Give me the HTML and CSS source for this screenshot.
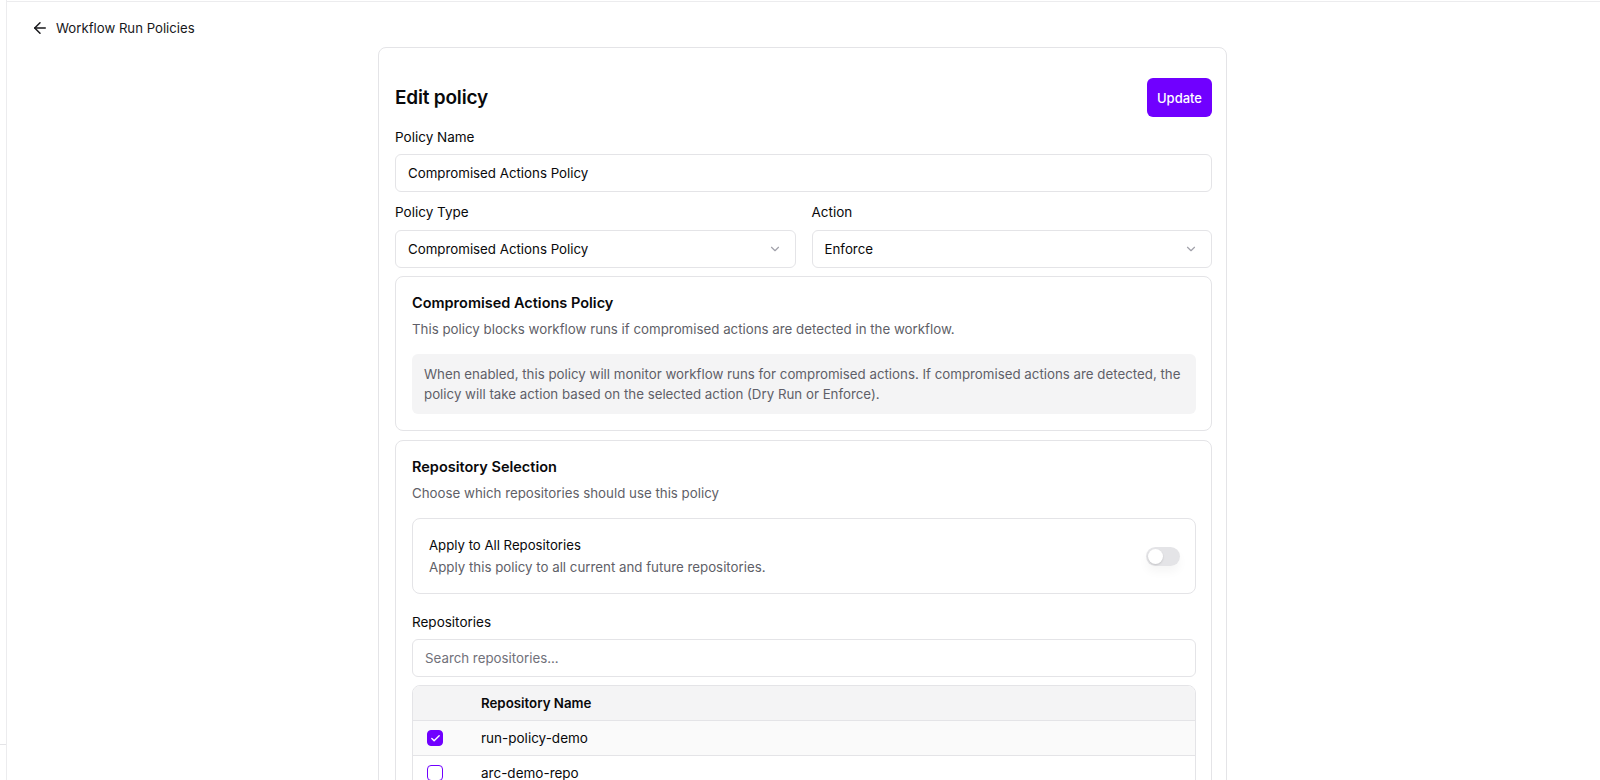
FILE: index.html
```html
<!DOCTYPE html>
<html lang="en">
<head>
  <meta charset="UTF-8">
  <meta name="viewport" content="width=device-width, initial-scale=1.0">
  <title>Edit policy</title>
  <link rel="stylesheet" href="styles.css">
</head>
<body>
  <div class="layout">
    <aside class="sidebar">
      <div class="sidebar-rule"></div>
    </aside>

    <main class="main">
      <a class="back-link" href="#">
        <svg class="back-icon" viewBox="0 0 24 24" fill="none" stroke="currentColor" stroke-width="2" stroke-linecap="round" stroke-linejoin="round">
          <path d="m12 19-7-7 7-7"/>
          <path d="M19 12H5"/>
        </svg>
        <span>Workflow Run Policies</span>
      </a>

      <form class="card">
        <div class="card-header">
          <h1>Edit policy</h1>
          <button type="button" class="btn-primary">Update</button>
        </div>

        <div class="field">
          <label>Policy Name</label>
          <div class="input">Compromised Actions Policy</div>
        </div>

        <div class="field-row">
          <div class="field">
            <label>Policy Type</label>
            <div class="input select">
              <span>Compromised Actions Policy</span>
              <svg class="chevron" viewBox="0 0 24 24" fill="none" stroke="currentColor" stroke-width="2" stroke-linecap="round" stroke-linejoin="round"><path d="m6 9 6 6 6-6"/></svg>
            </div>
          </div>
          <div class="field">
            <label>Action</label>
            <div class="input select">
              <span>Enforce</span>
              <svg class="chevron" viewBox="0 0 24 24" fill="none" stroke="currentColor" stroke-width="2" stroke-linecap="round" stroke-linejoin="round"><path d="m6 9 6 6 6-6"/></svg>
            </div>
          </div>
        </div>

        <section class="panel">
          <h2>Compromised Actions Policy</h2>
          <p class="muted">This policy blocks workflow runs if compromised actions are detected in the workflow.</p>
          <div class="note">
            When enabled, this policy will monitor workflow runs for compromised actions. If compromised actions are detected, the
            policy will take action based on the selected action (Dry Run or Enforce).
          </div>
        </section>

        <section class="panel repo-panel">
          <h2>Repository Selection</h2>
          <p class="muted">Choose which repositories should use this policy</p>

          <div class="toggle-box">
            <div>
              <div class="toggle-title">Apply to All Repositories</div>
              <div class="muted toggle-desc">Apply this policy to all current and future repositories.</div>
            </div>
            <span class="switch"><span class="thumb"></span></span>
          </div>

          <label class="repo-label">Repositories</label>
          <div class="input placeholder">Search repositories...</div>

          <div class="table">
            <div class="tr th">
              <div class="td"></div>
              <div class="td">Repository Name</div>
            </div>
            <div class="tr selected">
              <div class="td"><span class="checkbox checked">
                <svg viewBox="0 0 24 24" fill="none" stroke="currentColor" stroke-width="3" stroke-linecap="round" stroke-linejoin="round"><path d="M20 6 9 17l-5-5"/></svg>
              </span></div>
              <div class="td">run-policy-demo</div>
            </div>
            <div class="tr">
              <div class="td"><span class="checkbox"></span></div>
              <div class="td">arc-demo-repo</div>
            </div>
            <div class="tr">
              <div class="td"><span class="checkbox"></span></div>
              <div class="td">policy-test-repo</div>
            </div>
          </div>
        </section>
      </form>
    </main>
  </div>
</body>
</html>
```

FILE: styles.css
```css
* {
  margin: 0;
  padding: 0;
  box-sizing: border-box;
}

body {
  font-family: Inter, 'Noto Sans', sans-serif;
  font-size: 13.5px;
  color: #09090b;
  background-color: #ffffff;
  overflow: hidden;
}

.layout {
  display: flex;
  height: 780px;
}

.sidebar {
  width: 7px;
  flex-shrink: 0;
  border-right: 1px solid #ececee;
}

.sidebar-rule {
  margin-top: 744px;
  border-top: 1px solid #e4e4e7;
}

.main {
  flex: 1;
  margin-top: 1px;
  border-top: 1px solid #ececee;
  padding: 0 23px 0 21px;
}

.back-link {
  display: flex;
  align-items: center;
  gap: 7px;
  margin-top: 16px;
  height: 20px;
  padding-left: 3px;
  color: #18181b;
  text-decoration: none;
  font-size: 13.2px;
  font-weight: 400;
}

.back-icon {
  width: 18px;
  height: 18px;
}

.card {
  width: 849px;
  margin: 9px auto 0;
  padding: 30px 14px 16px 16px;
  border: 1px solid #e4e4e7;
  border-radius: 8px;
  display: flex;
  flex-direction: column;
  gap: 8px;
}

.card-header {
  display: flex;
  justify-content: space-between;
  align-items: center;
  margin-bottom: 2px;
}

.card-header h1 {
  font-size: 19px;
  font-weight: 600;
  letter-spacing: -0.2px;
}

.btn-primary {
  height: 39px;
  padding: 0 10px;
  border: none;
  border-radius: 6px;
  background-color: #7000ff;
  color: #ffffff;
  font-family: inherit;
  font-size: 13px;
  font-weight: 500;
}

.field {
  display: flex;
  flex-direction: column;
  flex: 1;
}

.field label,
.repo-label {
  display: block;
  line-height: 20px;
  margin-bottom: 7px;
  font-size: 13.5px;
  font-weight: 400;
}

.field-row {
  display: flex;
  gap: 16px;
  margin-top: 2px;
}

.field-row label {
  margin-bottom: 8px;
}

.input {
  height: 38px;
  display: flex;
  align-items: center;
  padding: 0 12px;
  border: 1px solid #e4e4e7;
  border-radius: 6px;
  font-size: 13.3px;
  font-weight: 400;
}

.select {
  justify-content: space-between;
}

.chevron {
  width: 14px;
  height: 14px;
  color: #a1a1aa;
  margin-right: 1px;
}

.placeholder {
  color: #71717a;
}

.panel {
  border: 1px solid #e4e4e7;
  border-radius: 8px;
  padding: 16px 15px 16px 16px;
}

.repo-panel {
  margin-top: 1px;
}

.panel h2 {
  font-size: 14.5px;
  font-weight: 600;
  line-height: 20px;
}

.muted {
  color: #5f5f68;
  font-size: 13.3px;
  line-height: 20px;
}

.panel > .muted {
  margin-top: 6px;
}

.note {
  margin-top: 15px;
  padding: 10px 12px;
  background-color: #f4f4f5;
  border-radius: 6px;
  color: #5f5f68;
  font-size: 13.3px;
  line-height: 20px;
}

.toggle-box {
  margin-top: 15px;
  display: flex;
  justify-content: space-between;
  align-items: center;
  padding: 16px 15px 16px 16px;
  border: 1px solid #e4e4e7;
  border-radius: 8px;
}

.toggle-title {
  font-size: 13.2px;
  font-weight: 400;
  line-height: 20px;
}

.toggle-desc {
  margin-top: 2px;
}

.switch {
  width: 34px;
  height: 19px;
  border-radius: 10px;
  background-color: #e4e4e7;
  padding: 2px;
  display: flex;
  box-shadow: 0 6px 10px rgba(0, 0, 0, 0.04);
}

.thumb {
  width: 15px;
  height: 15px;
  border-radius: 50%;
  background-color: #ffffff;
  box-shadow: 0 1px 2px rgba(0, 0, 0, 0.15);
}

.repo-label {
  margin-top: 18px;
  margin-bottom: 7px;
}

.table {
  margin-top: 8px;
  border: 1px solid #e4e4e7;
  border-radius: 8px;
  overflow: hidden;
}

.tr {
  display: grid;
  grid-template-columns: 52px 1fr;
  height: 35px;
  align-items: center;
  border-top: 1px solid #e4e4e7;
  font-size: 13.5px;
}

.tr.th {
  height: 34px;
  border-top: none;
  background-color: #f4f4f5;
  font-size: 13.3px;
  font-weight: 600;
}

.tr.selected {
  background-color: #fafafa;
}

.td {
  padding: 0 16px;
  display: flex;
  align-items: center;
}

.td:first-child {
  padding: 0 14px;
}

.checkbox {
  width: 16px;
  height: 16px;
  border: 1.5px solid #7000ff;
  border-radius: 4px;
  display: flex;
  align-items: center;
  justify-content: center;
  background-color: #ffffff;
}

.checkbox.checked {
  background-color: #7000ff;
  color: #ffffff;
}

.checkbox svg {
  width: 11px;
  height: 11px;
}
```
